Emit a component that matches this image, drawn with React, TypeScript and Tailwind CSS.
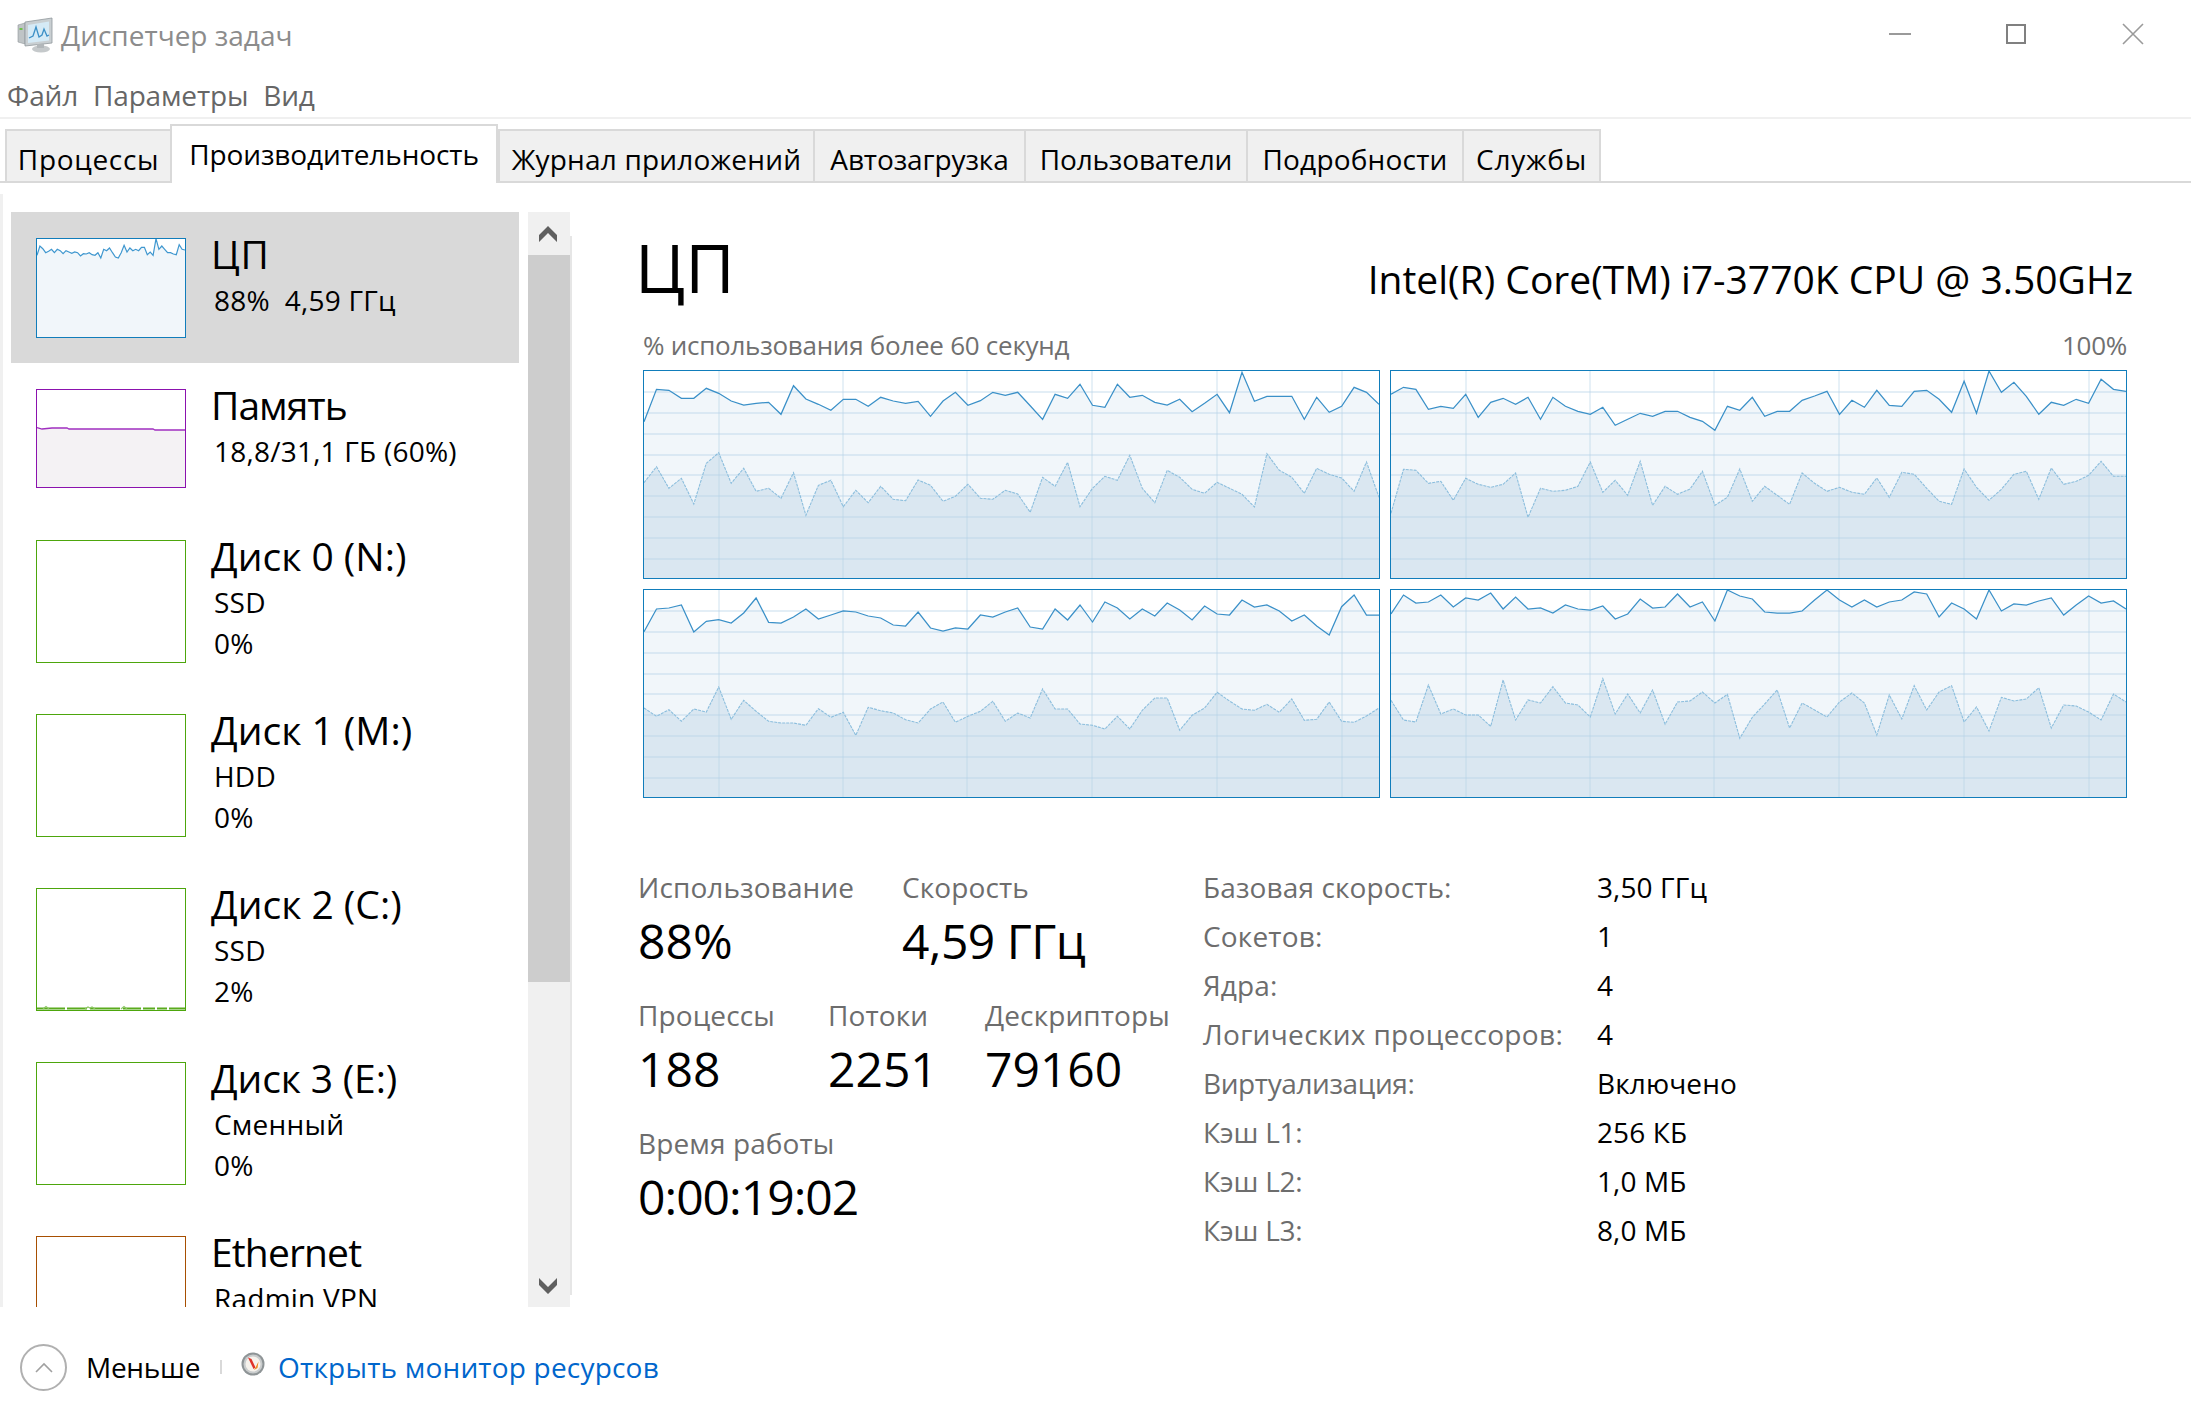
import React from "react";

const FONT = "font-['Open_Sans','Noto_Sans',sans-serif]";

type Series = { usage: number[]; kernel: number[]; top: number };

const CHARTS: Series[] = [
  {
    top: 30,
    usage: [185,88,91,115,115,85,100,123,135,130,127,163,77,117,133,151,118,118,139,112,123,130,124,169,123,97,136,122,97,106,97,137,178,103,115,73,136,142,73,112,106,127,135,118,155,130,103,158,37,124,109,109,109,178,112,157,139,82,97,133],
    kernel: [368,320,385,355,432,310,278,370,325,394,385,415,338,466,376,361,440,391,428,379,418,422,360,376,424,409,373,415,418,391,402,457,352,379,307,440,385,349,361,286,385,428,331,352,388,400,367,385,403,441,281,331,352,400,325,343,354,394,306,412],
  },
  {
    top: 30,
    usage: [103,82,88,148,139,145,103,172,127,115,133,112,178,112,139,154,163,142,196,178,160,169,154,154,172,184,211,139,151,112,169,154,154,121,108,94,163,121,142,91,136,139,94,91,118,157,64,160,31,97,67,109,163,127,136,118,130,58,88,94],
    kernel: [460,328,331,370,364,421,355,373,382,373,339,472,385,394,391,379,306,397,361,406,304,436,379,403,387,334,436,412,327,424,379,406,433,339,370,394,382,397,403,354,412,337,343,385,424,433,327,382,421,388,343,334,418,324,373,364,346,304,349,349],
  },
  {
    top: 688,
    usage: [816,748,745,736,817,785,780,790,760,715,788,790,772,748,778,766,754,757,769,775,796,799,757,805,814,805,808,766,772,757,745,802,808,748,781,736,787,727,745,778,748,769,730,751,781,739,763,766,721,742,736,754,784,766,799,826,741,706,766,766],
    kernel: [1045,1070,1050,1085,1048,1057,982,1079,1022,1055,1085,1090,1090,1097,1047,1073,1058,1127,1043,1053,1060,1080,1090,1048,1027,1088,1070,1055,1025,1085,1060,1075,988,1048,1048,1093,1097,1108,1070,1108,1052,1015,1015,1112,1067,1045,998,1024,1048,1052,1034,1058,1018,1082,1079,1027,1085,1088,1069,1045],
  },
  {
    top: 688,
    usage: [763,706,730,727,706,742,715,721,700,748,712,748,745,760,736,748,751,739,778,763,718,745,742,703,742,727,784,691,709,718,757,760,760,754,721,688,721,742,721,742,727,721,697,703,772,730,748,778,688,754,733,736,724,715,766,736,709,730,724,748],
    kernel: [1022,1081,1087,976,1063,1048,1066,1066,1100,961,1081,1021,1030,981,1030,1036,1072,957,1063,1003,1060,991,1094,1027,1024,997,1030,1004,1136,1073,1033,991,1105,1030,1051,1072,1027,1000,1030,1126,1006,1078,978,1051,997,978,1087,1042,1114,1013,1024,1018,984,1105,1036,1039,1057,1081,1003,1027],
  },
];

const W = 735;
const H = 207;

function pts(values: number[], top: number) {
  return values
    .map((v, i) => `${((i * W) / (values.length - 1)).toFixed(1)},${Math.max(0, (v - top) / 3 - 1).toFixed(1)}`)
    .join(" ");
}

function Chart({ s }: { s: Series }) {
  const up = pts(s.usage, s.top);
  const kp = pts(s.kernel, s.top);
  const hLines = [21, 42, 63, 84, 104, 125, 146, 167, 188];
  const vLines = [75, 199, 323, 448, 573, 698];
  return (
    <div className="h-[209px] w-[737px] border border-[#117dbb] bg-white">
      <svg width={W} height={H} viewBox={`0 0 ${W} ${H}`} className="block">
        <polygon points={`0,${H} ${up} ${W},${H}`} fill="#f1f6fa" />
        <polygon points={`0,${H} ${kp} ${W},${H}`} fill="#dae7f1" />
        {hLines.map((y) => (
          <line key={y} x1={0} x2={W} y1={y} y2={y} stroke="#b5d3e7" strokeOpacity="0.5" strokeWidth="1.3" />
        ))}
        {vLines.map((x) => (
          <line key={x} x1={x} x2={x} y1={0} y2={H} stroke="#b5d3e7" strokeOpacity="0.5" strokeWidth="1.3" />
        ))}
        <polyline points={kp} fill="none" stroke="#8cbedd" strokeWidth="1.1" strokeDasharray="3 1" />
        <polyline points={up} fill="none" stroke="#3a90c8" strokeWidth="1.25" />
      </svg>
    </div>
  );
}

const CPU_THUMB = [70,42,50,62,58,52,62,52,56,65,56,60,64,60,62,72,65,66,62,68,70,62,78,52,56,48,62,75,78,62,40,60,48,56,52,56,46,46,68,60,70,20,52,42,52,62,62,66,68,38,52,54];

function CpuThumb() {
  const p = CPU_THUMB.map((v, i) => `${((i * 148) / (CPU_THUMB.length - 1)).toFixed(1)},${((v - 21) / 3).toFixed(1)}`).join(" ");
  return (
    <svg width="148" height="98" viewBox="0 0 148 98" className="block">
      <rect width="148" height="98" fill="#ffffff" />
      <polygon points={`0,98 ${p} 148,98`} fill="#f1f6fa" />
      <polyline points={p} fill="none" stroke="#3f97cf" strokeWidth="1.2" />
    </svg>
  );
}

function MemThumb() {
  return (
    <svg width="148" height="97" viewBox="0 0 148 97" className="block">
      <rect width="148" height="97" fill="#ffffff" />
      <polygon points="0,37.5 5,39 15,38 30,38 32,39 116,39 118,40 148,40 148,97 0,97" fill="#f4f2f4" />
      <polyline points="0,37.5 5,39 15,38 30,38 32,39 116,39 118,40 148,40" fill="none" stroke="#a02fc0" strokeWidth="1.3" />
    </svg>
  );
}

function Disk2Thumb() {
  return (
    <svg width="148" height="121" viewBox="0 0 148 121" className="block">
      <path d="M0 119.5 H148" stroke="#5aab1e" strokeWidth="2" strokeDasharray="28 2 20 3 30 3 18 2 12 2 10 2 18 0" />
      <path d="M6 120 L9 117.5 L12 120 M48 120 L51 118 L53 119 L55 118 L58 120 M84 120 L87 117.5 L90 120" fill="none" stroke="#8cc665" strokeWidth="1.2" />
    </svg>
  );
}

type Item = {
  title: string;
  subs: string[];
  border: string;
  h: string;
  thumbH: string;
  titleClass?: string;
  selected?: boolean;
  thumb?: React.ReactNode;
};

const ITEMS: Item[] = [
  { title: "ЦП", subs: ["88%\u00a0\u00a04,59 ГГц"], border: "border-[#117dbb]", h: "h-[151px]", thumbH: "h-[100px]", titleClass: "tracking-[0.02em]", selected: true, thumb: <CpuThumb /> },
  { title: "Память", subs: ["18,8/31,1 ГБ (60%)"], border: "border-[#8b12ae]", h: "h-[151px]", thumbH: "h-[99px]", titleClass: "tracking-[-0.025em]", thumb: <MemThumb /> },
  { title: "Диск 0 (N:)", subs: ["SSD", "0%"], border: "border-[#4da60c]", h: "h-[174px]", thumbH: "h-[123px]" },
  { title: "Диск 1 (M:)", subs: ["HDD", "0%"], border: "border-[#4da60c]", h: "h-[174px]", thumbH: "h-[123px]" },
  { title: "Диск 2 (C:)", subs: ["SSD", "2%"], border: "border-[#4da60c]", h: "h-[174px]", thumbH: "h-[123px]", thumb: <Disk2Thumb /> },
  { title: "Диск 3 (E:)", subs: ["Сменный", "0%"], border: "border-[#4da60c]", h: "h-[174px]", thumbH: "h-[123px]", titleClass: "tracking-[-0.004em]" },
  { title: "Ethernet", subs: ["Radmin VPN"], border: "border-[#a74f01]", h: "h-[174px]", thumbH: "h-[123px]", titleClass: "tracking-[-0.022em]" },
];

function SideItem({ it }: { it: Item }) {
  return (
    <div className={`flex w-[508px] shrink-0 pl-[25px] pt-[26px] ${it.h} ${it.selected ? "bg-[#d9d9d9]" : ""}`}>
      <div className={`w-[150px] shrink-0 border bg-white ${it.border} ${it.thumbH}`}>{it.thumb}</div>
      <div className="-mt-[9px] ml-[25px] flex flex-col text-black">
        <div className={`whitespace-nowrap text-[39px] leading-[50px] ${it.titleClass ?? ""}`}>{it.title}</div>
        {it.subs.map((s) => (
          <div key={s} className="mt-[1px] -mb-[1px] whitespace-nowrap pl-[3px] text-[28px] leading-[41px] tracking-[0.008em]">
            {s}
          </div>
        ))}
      </div>
    </div>
  );
}

function TaskIcon() {
  return (
    <svg width="38" height="36" viewBox="0 0 38 36" className="block">
      <path d="M2 8 L9 6 V27 L2 25 Z" fill="#bfc4c6" stroke="#8f9698" strokeWidth="0.6" />
      <rect x="3.5" y="11" width="3" height="2" fill="#6fc14a" />
      <path d="M9 5 L36 1 V26 L9 29 Z" fill="#c9cfd2" stroke="#90989c" strokeWidth="0.8" />
      <path d="M12 8 L33 4.5 V23.5 L12 26 Z" fill="#d5eaf6" />
      <polyline points="13,21 17,19 20,10 23,20 26,18 28,12 31,19 33,18" fill="none" stroke="#3c8fc6" strokeWidth="1.3" />
      <ellipse cx="25" cy="32" rx="9" ry="3.5" fill="#c5c9cb" />
      <rect x="21" y="27" width="7" height="4" fill="#b2b7ba" />
    </svg>
  );
}

function MonitorIcon() {
  return (
    <svg width="24" height="24" viewBox="0 0 24 24" className="block">
      <circle cx="12" cy="12" r="11.5" fill="#8e9496" />
      <circle cx="12" cy="12" r="9.5" fill="#c9cccd" />
      <circle cx="12" cy="12" r="7.5" fill="#f6f2ec" />
      <path d="M7 5.5 L10.5 7 L14.5 15.5 L12.5 17 Z" fill="#e0332a" />
      <path d="M14.5 15.5 L17.5 9.5 L16.5 16 L13 18 Z" fill="#ee8a22" />
    </svg>
  );
}

function Tab({ label, w, track, last }: { label: string; w: string; track: string; last?: boolean }) {
  return (
    <div className={`box-border flex h-[52px] items-start justify-center whitespace-nowrap border-l-2 ${last ? "border-r-2" : ""} border-t-2 border-[#d9d9d9] bg-[#f0f0f0] pt-[10px] text-[28px] leading-[36px] text-black ${track} ${w}`}>
      {label}
    </div>
  );
}

function Stat({ label, value, w, track }: { label: string; value: string; w: string; track?: string }) {
  return (
    <div className={`flex flex-col ${w}`}>
      <div className="whitespace-nowrap text-[28px] leading-[38px] tracking-[0.004em] text-[#6d6d6d]">{label}</div>
      <div className={`whitespace-nowrap text-[48px] leading-[70px] text-black ${track ?? ""}`}>{value}</div>
    </div>
  );
}

const SPECS: [string, string, string][] = [
  ["Базовая скорость:", "3,50 ГГц", "tracking-[0.004em]"],
  ["Сокетов:", "1", "tracking-[0.006em]"],
  ["Ядра:", "4", "tracking-[0.004em]"],
  ["Логических процессоров:", "4", "tracking-[0.012em]"],
  ["Виртуализация:", "Включено", "tracking-[-0.014em]"],
  ["Кэш L1:", "256 КБ", "tracking-[-0.008em]"],
  ["Кэш L2:", "1,0 МБ", "tracking-[-0.008em]"],
  ["Кэш L3:", "8,0 МБ", "tracking-[-0.008em]"],
];

export default function App() {
  return (
    <div className={`flex h-[1427px] w-[2191px] flex-col overflow-hidden bg-white ${FONT}`}>
      {/* Title bar */}
      <div className="flex h-[72px] shrink-0 items-center justify-between pb-[2px]">
        <div className="flex items-center pl-[16px]">
          <TaskIcon />
          <span className="ml-[7px] text-[28px] text-[#8c8c8c]">Диспетчер задач</span>
        </div>
        <div className="-mt-[2px] flex items-center">
          <svg width="22" height="22" viewBox="0 0 22 22" className="mr-[95px] block">
            <line x1="0" x2="22" y1="11" y2="11" stroke="#9a9a9a" strokeWidth="2" />
          </svg>
          <svg width="20" height="20" viewBox="0 0 20 20" className="mr-[96px] block">
            <rect x="1" y="1" width="18" height="18" fill="none" stroke="#808080" strokeWidth="2" />
          </svg>
          <svg width="22" height="22" viewBox="0 0 22 22" className="mr-[47px] block">
            <path d="M1 1 L21 21 M21 1 L1 21" stroke="#9a9a9a" strokeWidth="1.6" />
          </svg>
        </div>
      </div>

      {/* Menu */}
      <div className="flex h-[47px] shrink-0 items-start gap-[15px] border-b-2 border-[#f0f0f0] pl-[7px] text-[28px] leading-[46px] tracking-[-0.006em] text-[#666666]">
        <span>Файл</span>
        <span>Параметры</span>
        <span>Вид</span>
      </div>

      {/* Tabs */}
      <div className="flex h-[64px] shrink-0 items-end border-b-2 border-[#d9d9d9] pl-[5px]">
        <Tab label="Процессы" w="w-[165px]" track="tracking-[0.024em]" />
        <div className="-mb-[2px] box-border flex h-[59px] w-[328px] items-start justify-center whitespace-nowrap border-x-2 border-t-2 border-[#d9d9d9] bg-white pt-[10px] text-[28px] leading-[36px] tracking-[-0.004em] text-black">
          Производительность
        </div>
        <Tab label="Журнал приложений" w="w-[315px]" track="tracking-[0.007em]" />
        <Tab label="Автозагрузка" w="w-[211px]" track="tracking-[-0.004em]" />
        <Tab label="Пользователи" w="w-[222px]" track="tracking-[-0.006em]" />
        <Tab label="Подробности" w="w-[216px]" track="tracking-[0.007em]" />
        <Tab label="Службы" w="w-[139px]" track="tracking-[0.026em]" last />
      </div>

      {/* Body */}
      <div className="flex h-[1124px] shrink-0">
        <div className="mt-[11px] flex h-[1113px] w-[572px] shrink-0">
          <div className="w-[3px] shrink-0 bg-[#f0f0f0]" />
          <div className="w-[525px] shrink-0 overflow-hidden pl-[8px] pt-[18px]">
            {ITEMS.map((it) => (
              <SideItem key={it.title} it={it} />
            ))}
          </div>
          <div className="mt-[18px] flex h-[1095px] w-[42px] shrink-0 flex-col bg-[#f0f0f0]">
            <div className="flex h-[43px] shrink-0 items-center justify-center">
              <svg width="20" height="18" viewBox="0 0 20 18" className="block -translate-x-[1px]">
                <path d="M10 1 L19 10 V17 L10 8 L1 17 V10 Z" fill="#5f5f5f" />
              </svg>
            </div>
            <div className="h-[727px] shrink-0 bg-[#cdcdcd]" />
            <div className="flex flex-1 items-end justify-center pb-[12px]">
              <svg width="20" height="18" viewBox="0 0 20 18" className="block -translate-x-[1px]">
                <path d="M10 17 L19 8 V1 L10 10 L1 1 V8 Z" fill="#5f5f5f" />
              </svg>
            </div>
          </div>
          <div className="mt-[42px] h-[1059px] w-[2px] shrink-0 bg-[#e6e6e6]" />
        </div>

        {/* Main */}
        <div className="flex w-[1619px] flex-col pl-[66px] pr-[58px]">
          <div className="flex h-[121px] shrink-0 items-end justify-between pb-[1px]">
            <span className="-ml-[3px] text-[68px] leading-[72px] text-black">ЦП</span>
            <span className="-mb-[1px] whitespace-nowrap text-[39px] leading-[50px] text-black">Intel(R) Core(TM) i7-3770K CPU @ 3.50GHz</span>
          </div>
          <div className="flex h-[66px] shrink-0 items-center justify-between pl-[5px] pr-[6px] pt-[16px] text-[26px] tracking-[-0.01em] text-[#707070]">
            <span>% использования более 60 секунд</span>
            <span>100%</span>
          </div>
          <div className="ml-[5px] grid w-[1484px] shrink-0 grid-cols-[737px_737px] gap-[10px]">
            {CHARTS.map((s, i) => (
              <Chart key={i} s={s} />
            ))}
          </div>
          <div className="mt-[65px] flex">
            <div className="flex w-[565px] shrink-0 flex-col gap-[20px] pt-[5px]">
              <div className="flex">
                <Stat label="Использование" value="88%" w="w-[264px]" />
                <Stat label="Скорость" value="4,59 ГГц" w="w-[300px]" track="tracking-[-0.01em]" />
              </div>
              <div className="flex">
                <Stat label="Процессы" value="188" w="w-[190px]" />
                <Stat label="Потоки" value="2251" w="w-[157px]" />
                <Stat label="Дескрипторы" value="79160" w="w-[218px]" />
              </div>
              <Stat label="Время работы" value="0:00:19:02" w="w-[300px]" track="tracking-[-0.02em]" />
            </div>
            <div className="grid grid-cols-[394px_auto] auto-rows-[49px] items-center text-[28px] leading-[49px]">
              {SPECS.map(([k, v, t]) => (
                <React.Fragment key={k}>
                  <div className={`whitespace-nowrap text-[#6d6d6d] ${t}`}>{k}</div>
                  <div className="whitespace-nowrap tracking-[0.004em] text-black">{v}</div>
                </React.Fragment>
              ))}
            </div>
          </div>
        </div>
      </div>

      {/* Footer */}
      <div className="relative z-10 flex h-[120px] shrink-0 items-center bg-white pl-[20px]">
        <div className="flex h-[47px] w-[47px] shrink-0 items-center justify-center rounded-full border-2 border-[#b0b0b0]">
          <svg width="18" height="11" viewBox="0 0 18 11" className="block">
            <path d="M1 10 L9 2 L17 10" fill="none" stroke="#a0a0a0" strokeWidth="1.6" />
          </svg>
        </div>
        <span className="ml-[19px] text-[28px] tracking-[-0.01em] text-black">Меньше</span>
        <div className="ml-[20px] h-[14px] w-[2px] bg-[#d9d9d9]" />
        <div className="-mt-[6px] ml-[19px]">
          <MonitorIcon />
        </div>
        <span className="ml-[13px] text-[28px] tracking-[0.007em] text-[#0066cc]">Открыть монитор ресурсов</span>
      </div>
    </div>
  );
}
